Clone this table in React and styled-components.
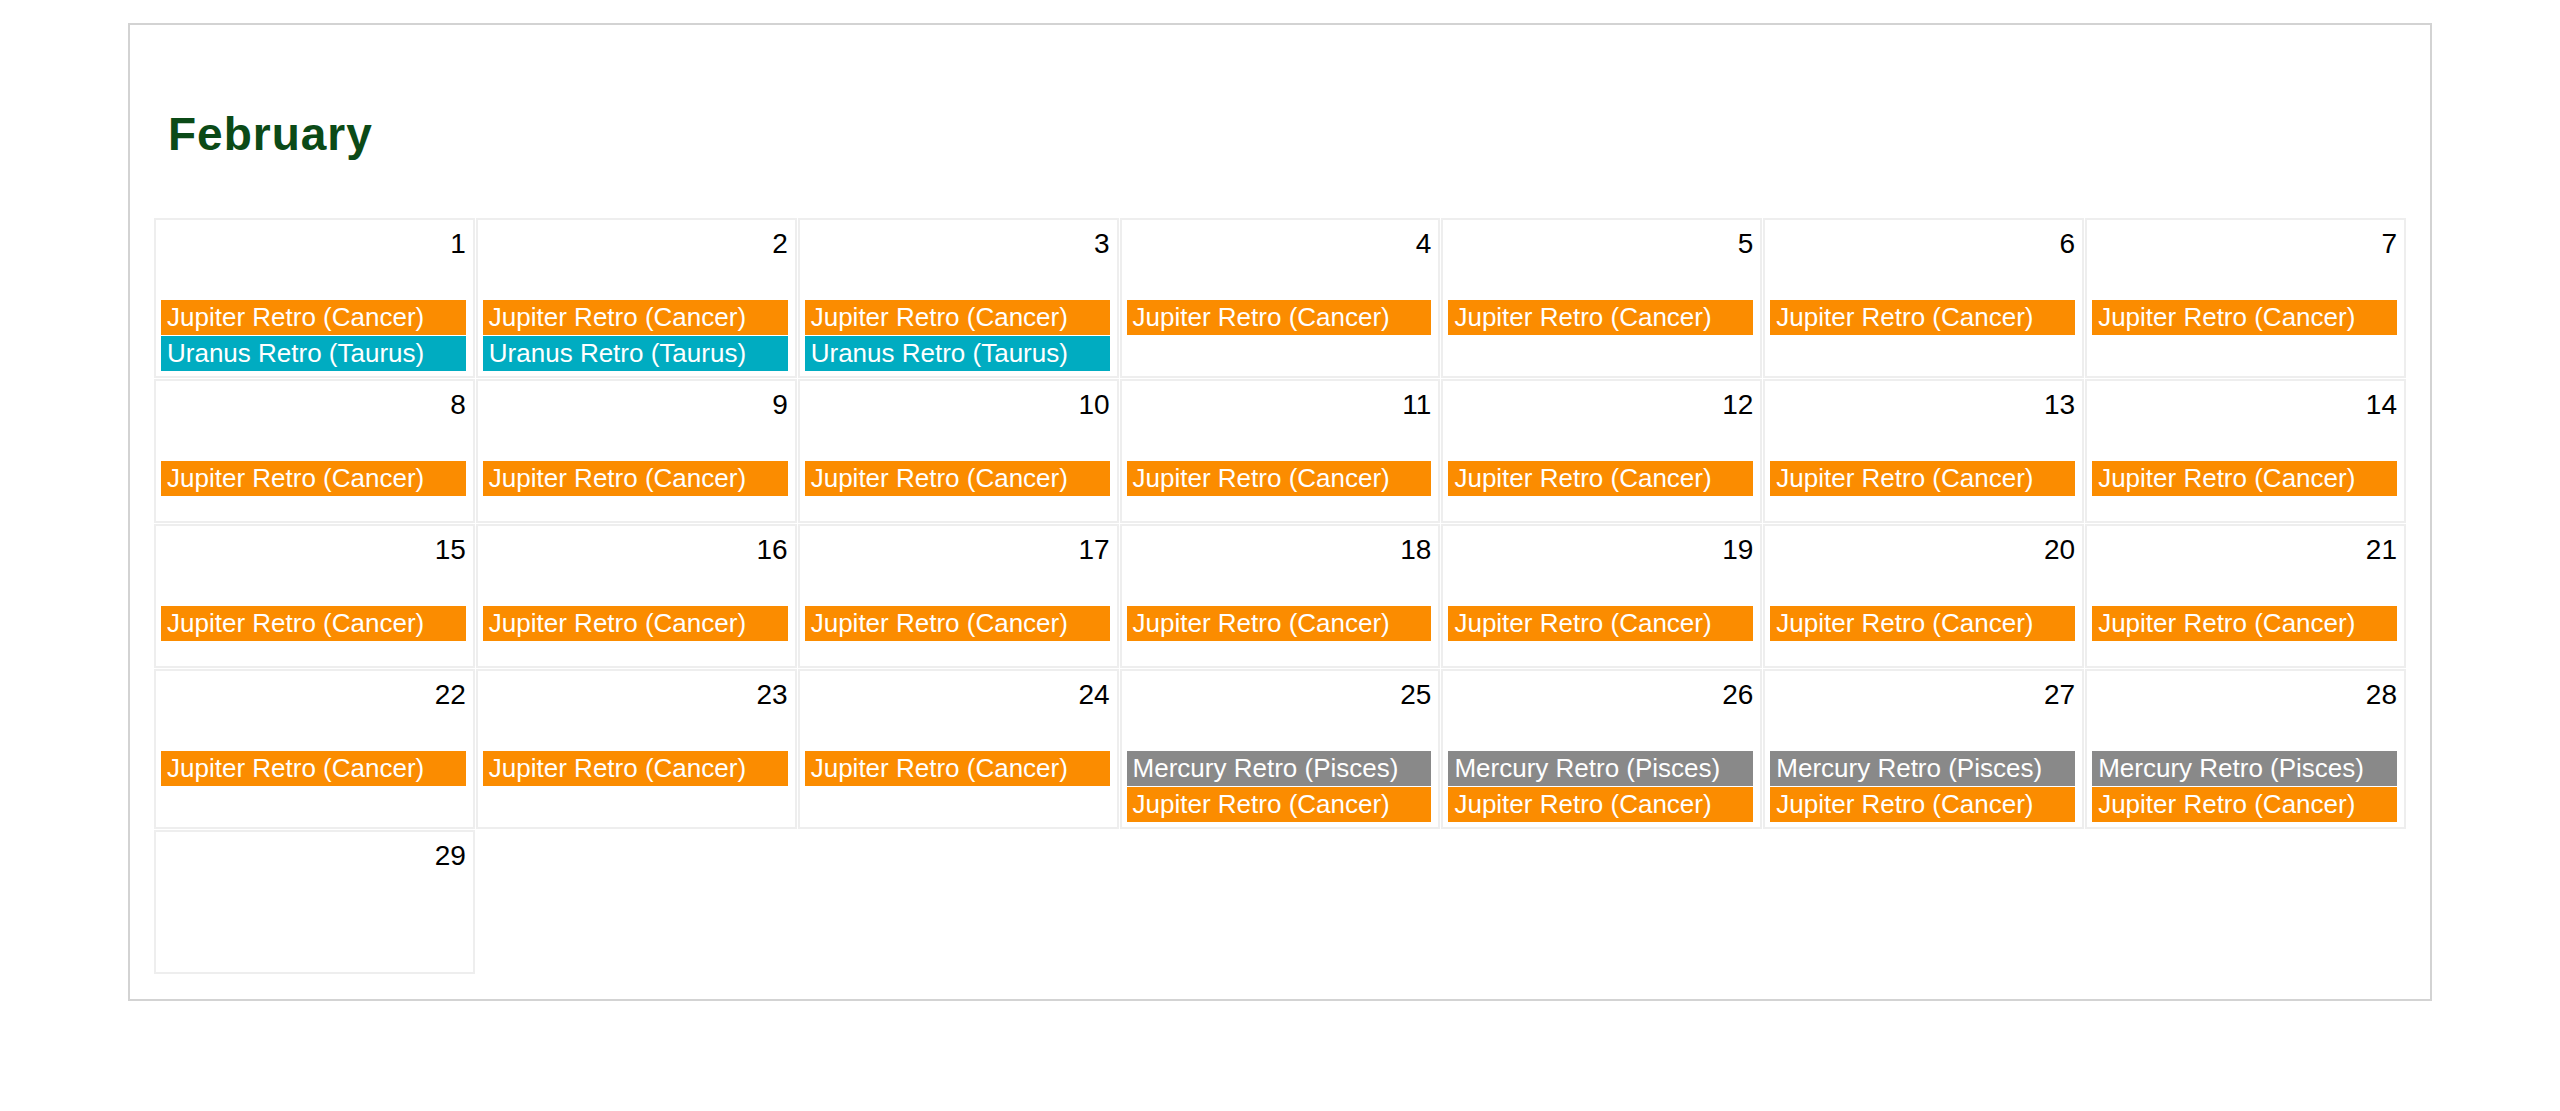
import React from "react";
import styled, { createGlobalStyle } from "styled-components";

const GlobalStyle = createGlobalStyle`
  html, body {
    margin: 0;
    padding: 0;
    background: #ffffff;
    font-family: "Liberation Sans", Arial, sans-serif;
  }
`;

const Wrapper = styled.div`
  box-sizing: border-box;
  width: 90%;
  margin: 23px auto 0;
  border: 2px solid #d3d3d3;
  padding: 0 24px 25px;
`;

const MonthTitle = styled.h2`
  margin: 83px 0 58px;
  padding-left: 14px;
  font-size: 46px;
  line-height: 52px;
  font-weight: bold;
  letter-spacing: 1px;
  color: #0b4a17;
`;

const Grid = styled.div`
  display: grid;
  grid-template-columns: repeat(7, 1fr);
  gap: 1px;
`;

const Cell = styled.div`
  box-sizing: border-box;
  min-height: 144px;
  border: 2px solid #eeeeee;
  padding: 8px 7px 5px 5px;
`;

const DayNumber = styled.div`
  font-size: 28px;
  line-height: 32px;
  text-align: right;
  color: #000000;
`;

const Events = styled.div`
  margin-top: 40px;
  display: flex;
  flex-direction: column;
  gap: 1px;
`;

const EventBar = styled.div`
  background: ${(p) => p.$color};
  color: #ffffff;
  font-size: 26px;
  line-height: 31px;
  padding: 2px 6px;
  white-space: nowrap;
  overflow: hidden;
`;

const COLORS = {
  jupiter: "#fb8c00",
  uranus: "#00acc1",
  mercury: "#898989",
};

const LABELS = {
  jupiter: "Jupiter Retro (Cancer)",
  uranus: "Uranus Retro (Taurus)",
  mercury: "Mercury Retro (Pisces)",
};

const eventsFor = (day) => {
  if (day <= 3) return ["jupiter", "uranus"];
  if (day <= 24) return ["jupiter"];
  if (day <= 28) return ["mercury", "jupiter"];
  return [];
};

const days = Array.from({ length: 29 }, (_, i) => i + 1);

const App = () => {
  return (
    <>
      <GlobalStyle />
      <Wrapper>
        <MonthTitle>February</MonthTitle>
        <Grid>
          {days.map((day) => {
            const list = eventsFor(day);
            return (
              <Cell key={day}>
                <DayNumber>{day}</DayNumber>
                {list.length > 0 && (
                  <Events>
                    {list.map((ev) => (
                      <EventBar key={ev} $color={COLORS[ev]}>
                        {LABELS[ev]}
                      </EventBar>
                    ))}
                  </Events>
                )}
              </Cell>
            );
          })}
        </Grid>
      </Wrapper>
    </>
  );
};

export default App;
